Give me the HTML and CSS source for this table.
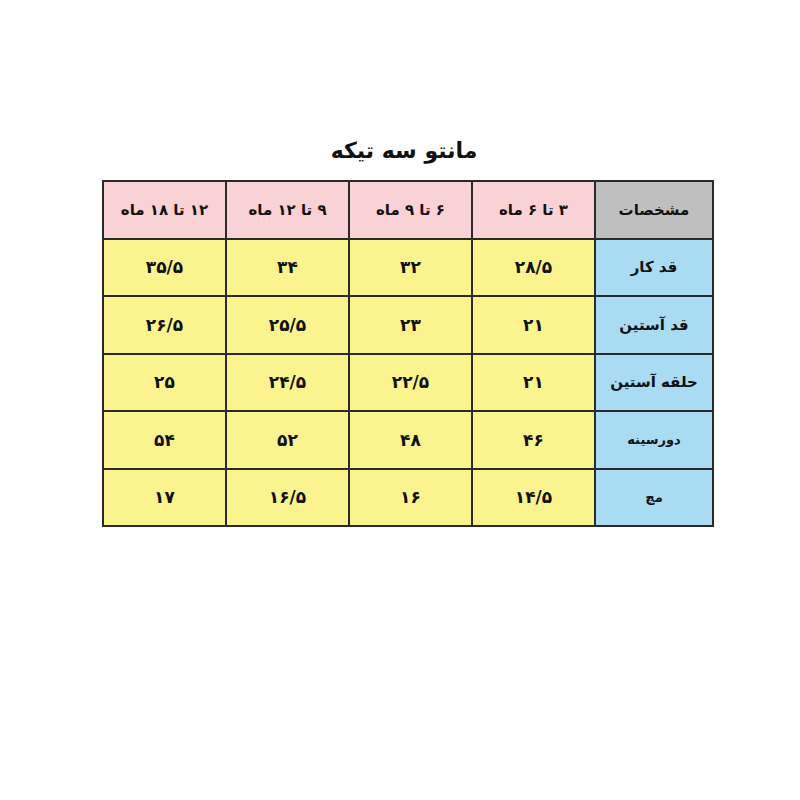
FILE: index.html
```html
<!DOCTYPE html>
<html lang="fa" dir="rtl">
<head>
<meta charset="utf-8">
<link rel="stylesheet" href="styles.css">
</head>
<body>
<main class="page">
  <h1 class="title">مانتو سه تیکه</h1>
  <table class="size-table">
    <tr class="head">
      <th class="label gray">مشخصات</th>
      <th>۳ تا ۶ ماه</th>
      <th>۶ تا ۹ ماه</th>
      <th>۹ تا ۱۲ ماه</th>
      <th>۱۲ تا ۱۸ ماه</th>
    </tr>
    <tr>
      <td class="label">قد کار</td>
      <td>۲۸/۵</td><td>۳۲</td><td>۳۴</td><td>۳۵/۵</td>
    </tr>
    <tr>
      <td class="label">قد آستین</td>
      <td>۲۱</td><td>۲۳</td><td>۲۵/۵</td><td>۲۶/۵</td>
    </tr>
    <tr>
      <td class="label">حلقه آستین</td>
      <td>۲۱</td><td>۲۲/۵</td><td>۲۴/۵</td><td>۲۵</td>
    </tr>
    <tr>
      <td class="label small">دورسینه</td>
      <td>۴۶</td><td>۴۸</td><td>۵۲</td><td>۵۴</td>
    </tr>
    <tr>
      <td class="label small">مچ</td>
      <td>۱۴/۵</td><td>۱۶</td><td>۱۶/۵</td><td>۱۷</td>
    </tr>
  </table>
</main>
</body>
</html>
```
FILE: styles.css
```css
html, body {
  margin: 0;
  padding: 0;
  background: #ffffff;
}
.page {
  width: 800px;
  height: 800px;
  display: flex;
  flex-direction: column;
  align-items: center;
  padding-top: 134px;
  box-sizing: border-box;
  font-family: "DejaVu Sans", sans-serif;
  color: #111;
}
.title {
  margin: 0 0 12px 0;
  font-size: 22px;
  font-weight: bold;
  line-height: 34px;
  transform: translateX(4px);
}
.size-table {
  border-collapse: collapse;
  table-layout: fixed;
  transform: translateX(8px);
}
.size-table th,
.size-table td {
  border: 2px solid #2a2a2a;
  height: 55.5px;
  padding: 0;
  text-align: center;
  vertical-align: middle;
  font-weight: bold;
  font-size: 17px;
  background: #fbf48e;
  width: 121px;
}
.size-table .head th {
  background: #f9d2d6;
  font-size: 15px;
}
.size-table .head th.gray {
  background: #bfbfbf;
  font-size: 15px;
}
.size-table .label {
  width: 116px;
}
.size-table td.label {
  background: #a9dcf3;
  font-size: 15px;
}
.size-table td.label.small {
  font-size: 13px;
}
```
